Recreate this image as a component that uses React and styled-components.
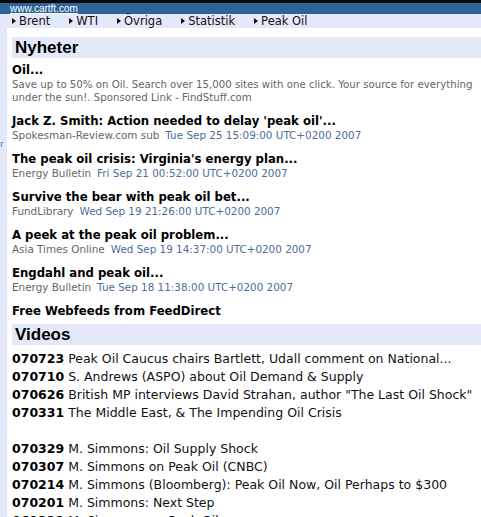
import React from 'react';
import styled, {createGlobalStyle} from 'styled-components';

const Global = createGlobalStyle`
    body {
        margin: 0;
        background: #fff;
        font-family: "DejaVu Sans", Verdana, sans-serif;
    }
`

const news = [
    {title: "Jack Z. Smith: Action needed to delay 'peak oil'...", source: 'Spokesman-Review.com sub', date: 'Tue Sep 25 15:09:00 UTC+0200 2007'},
    {title: "The peak oil crisis: Virginia's energy plan...", source: 'Energy Bulletin', date: 'Fri Sep 21 00:52:00 UTC+0200 2007'},
    {title: 'Survive the bear with peak oil bet...', source: 'FundLibrary', date: 'Wed Sep 19 21:26:00 UTC+0200 2007'},
    {title: 'A peek at the peak oil problem...', source: 'Asia Times Online', date: 'Wed Sep 19 14:37:00 UTC+0200 2007'},
    {title: 'Engdahl and peak oil...', source: 'Energy Bulletin', date: 'Tue Sep 18 11:38:00 UTC+0200 2007'},
]

const videos = [
    ['070723', 'Peak Oil Caucus chairs Bartlett, Udall comment on National...'],
    ['070710', 'S. Andrews (ASPO) about Oil Demand & Supply'],
    ['070626', 'British MP interviews David Strahan, author "The Last Oil Shock"'],
    ['070331', 'The Middle East, & The Impending Oil Crisis'],
    null,
    ['070329', 'M. Simmons: Oil Supply Shock'],
    ['070307', 'M. Simmons on Peak Oil (CNBC)'],
    ['070214', 'M. Simmons (Bloomberg): Peak Oil Now, Oil Perhaps to $300'],
    ['070201', 'M. Simmons: Next Step'],
    ['061222', 'M. Simmons on Peak Oil'],
]

const menu = ['Brent', 'WTI', 'Övriga', 'Statistik', 'Peak Oil']

export default function App() {
    return (
        <>
        <Global />
        <Page>
            <TopBar>
                <SiteLink href="#">www.cartft.com</SiteLink>
            </TopBar>
            <Nav>
                {menu.map((m) => (
                    <NavItem key={m}><Arrow />{m}</NavItem>
                ))}
            </Nav>
            <Body>
                <Side><SideMark>r</SideMark></Side>
                <Main>
                    <Heading>Nyheter</Heading>
                    <NewsList>
                        <Item>
                            <Title>Oil...</Title>
                            <Desc>Save up to 50% on Oil. Search over 15,000 sites with one click. Your source for everything under the sun!. Sponsored Link - FindStuff.com</Desc>
                        </Item>
                        {news.map((n) => (
                            <Item key={n.title}>
                                <Title>{n.title}</Title>
                                <Meta>{n.source}<Date>{n.date}</Date></Meta>
                            </Item>
                        ))}
                        <Title>Free Webfeeds from FeedDirect</Title>
                    </NewsList>
                    <Heading $top>Videos</Heading>
                    <VideoList>
                        {videos.map((v, i) => v ? (
                            <VideoRow key={v[0]}><b>{v[0]}</b> {v[1]}</VideoRow>
                        ) : <VideoRow key={'gap' + i}>&nbsp;</VideoRow>)}
                    </VideoList>
                </Main>
            </Body>
        </Page>
        </>
    )
}

const Page = styled.div`
    width: 481px;
    height: 517px;
    overflow: hidden;
    background: #fff;
`

const TopBar = styled.div`
    height: 11px;
    border-top: 3px solid #0a0a0a;
    background: #2e6399;
    padding-left: 10px;
    display: flex;
    align-items: center;
`

const SiteLink = styled.a`
    font-family: "Liberation Sans", Arial, sans-serif;
    font-size: 10px;
    line-height: 11px;
    color: #fff;
    text-decoration: underline;
`

const Nav = styled.div`
    height: 14px;
    background: #e3e9f8;
    display: flex;
    align-items: center;
    padding-left: 12px;
    font-size: 11.5px;
    color: #111;
`

const NavItem = styled.div`
    display: flex;
    align-items: center;
    margin-right: 19px;
`

const Arrow = styled.span`
    width: 0;
    height: 0;
    border-top: 3.5px solid transparent;
    border-bottom: 3.5px solid transparent;
    border-left: 4px solid #111;
    margin-right: 3px;
`

const Body = styled.div`
    display: flex;
    padding-top: 9px;
`

const Side = styled.div`
    width: 7px;
    flex-shrink: 0;
    background: #e3e9f8;
    margin-top: -9px;
    height: 500px;
    position: relative;
`

const SideMark = styled.span`
    position: absolute;
    top: 111px;
    left: 0;
    font-size: 9px;
    color: #4a78b0;
`

const Main = styled.div`
    flex: 1;
    padding-left: 5px;
`

const Heading = styled.div`
    height: 21px;
    background: #e3e9f8;
    font-family: "Liberation Sans", Arial, sans-serif;
    font-weight: bold;
    font-size: 17px;
    line-height: 22px;
    padding-left: 3px;
    color: #000;
    margin-top: ${(p) => (p.$top ? '5px' : '0')};
`

const NewsList = styled.div`
    padding-top: 3px;
`

const Item = styled.div`
    margin-bottom: 8px;
`

const Title = styled.div`
    font-weight: bold;
    font-size: 11.7px;
    line-height: 15px;
    color: #000;
    padding-top: 2px;
`

const Desc = styled.div`
    font-size: 10.2px;
    line-height: 13px;
    color: #666;
`

const Meta = styled.div`
    font-size: 10.4px;
    line-height: 13px;
    color: #666;
`

const Date = styled.span`
    color: #4b6d9c;
    margin-left: 6px;
`

const VideoList = styled.div`
    padding-top: 5px;
`

const VideoRow = styled.div`
    font-size: 12.5px;
    line-height: 18px;
    color: #111;
    white-space: nowrap;
    b { color: #000; }
`
